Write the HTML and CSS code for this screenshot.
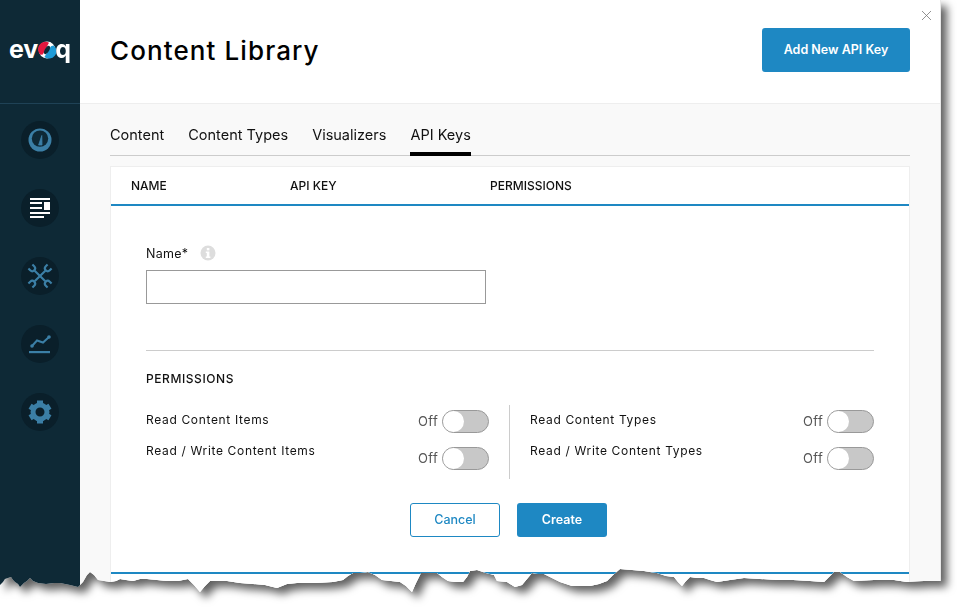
FILE: index.html
```html
<!DOCTYPE html>
<html lang="en">
<head>
    <meta charset="UTF-8">
    <meta name="viewport" content="width=device-width, initial-scale=1.0">
    <title>Content Library</title>
    <link rel="stylesheet" href="styles.css">
</head>
<body>
    <div class="shot">
        <div class="window">
            <aside class="sidebar">
                <div class="logo">
                    <span>ev</span><svg class="logo-o" viewBox="0 0 18 18" width="18" height="18">
                        <circle cx="9" cy="9" r="8.4" fill="#fff"/>
                        <path d="M2.5 13.8A7.4 7.4 0 0 1 11 1.8L4.8 13.6Z" fill="#e4173e"/>
                        <path d="M15.6 4.4A7.4 7.4 0 0 1 6.4 16L13 5.2Z" fill="#1e9bd7"/>
                        <ellipse cx="9" cy="9" rx="2.2" ry="4.6" transform="rotate(30 9 9)" fill="#0e2936"/>
                    </svg><span>q</span>
                </div>
                <nav class="nav">
                    <div class="nav-item">
                        <svg viewBox="0 0 38 38" width="38" height="38">
                            <circle cx="19" cy="19" r="11.5" fill="#3b7fa6"/>
                            <circle cx="19" cy="17.6" r="8.2" fill="#0e2936"/>
                            <path d="M17.6 24L20.8 14.5L21 24Z" fill="#3b7fa6" stroke="#3b7fa6" stroke-width="0.8"/>
                        </svg>
                    </div>
                    <div class="nav-item">
                        <svg viewBox="0 0 38 38" width="38" height="38" fill="#fff">
                            <rect x="9" y="9" width="20" height="2"/>
                            <rect x="9" y="13" width="12" height="2"/>
                            <rect x="9" y="18" width="12" height="2"/>
                            <rect x="23" y="13" width="6" height="8"/>
                            <rect x="9" y="23" width="20" height="2"/>
                            <rect x="9" y="27" width="14" height="2"/>
                        </svg>
                    </div>
                    <div class="nav-item">
                        <svg viewBox="0 0 38 38" width="38" height="38" fill="none" stroke="#3b7fa6" stroke-width="2.4">
                            <g transform="translate(19 19) rotate(45) scale(0.88)">
                                <path d="M0 -9V9M-3.2 -15.4V-12.5Q-3.2 -9.2 0 -9.2Q3.2 -9.2 3.2 -12.5V-15.4M-3.2 15.4V12.5Q-3.2 9.2 0 9.2Q3.2 9.2 3.2 12.5V15.4"/>
                            </g>
                            <g transform="translate(19 19) rotate(-45) scale(0.88)">
                                <path d="M0 -9V9M-3.2 -15.4V-12.5Q-3.2 -9.2 0 -9.2Q3.2 -9.2 3.2 -12.5V-15.4M-3.2 15.4V12.5Q-3.2 9.2 0 9.2Q3.2 9.2 3.2 12.5V15.4"/>
                            </g>
                        </svg>
                    </div>
                    <div class="nav-item">
                        <svg viewBox="0 0 38 38" width="38" height="38" fill="#3b7fa6">
                            <rect x="8" y="26" width="21" height="2.2"/>
                            <path d="M11 21L16 15.5L22 17.5L28 12" fill="none" stroke="#3b7fa6" stroke-width="2"/>
                            <circle cx="11" cy="21" r="1.8"/>
                            <circle cx="28" cy="12" r="1.8"/>
                        </svg>
                    </div>
                    <div class="nav-item">
                        <svg viewBox="0 0 38 38" width="38" height="38" fill="#3b7fa6">
                            <circle cx="19" cy="19" r="7" fill="none" stroke="#3b7fa6" stroke-width="5"/>
                            <rect x="16" y="7.5" width="6" height="5"/>
                            <rect x="16" y="25.5" width="6" height="5"/>
                            <rect x="16" y="7.5" width="6" height="5" transform="rotate(60 19 19)"/>
                            <rect x="16" y="25.5" width="6" height="5" transform="rotate(60 19 19)"/>
                            <rect x="16" y="7.5" width="6" height="5" transform="rotate(120 19 19)"/>
                            <rect x="16" y="25.5" width="6" height="5" transform="rotate(120 19 19)"/>
                        </svg>
                    </div>
                </nav>
            </aside>

            <main class="main">
                <header class="header">
                    <h1>Content Library</h1>
                    <button class="btn btn-primary btn-add">Add New API Key</button>
                    <svg class="close" viewBox="0 0 9 9" width="9" height="9">
                        <path d="M0 0L9 9M9 0L0 9" stroke="#777" stroke-width="0.8"/>
                    </svg>
                </header>

                <div class="content">
                    <div class="tabs">
                        <a>Content</a>
                        <a>Content Types</a>
                        <a>Visualizers</a>
                        <a class="active">API Keys</a>
                    </div>

                    <section class="card">
                        <div class="card-head">
                            <span>NAME</span>
                            <span>API KEY</span>
                            <span>PERMISSIONS</span>
                        </div>
                        <form class="form">
                            <div class="name-label">
                                <label>Name*</label>
                                <svg viewBox="0 0 16 16" width="16" height="16">
                                    <circle cx="8" cy="8" r="7.5" fill="#ddd"/>
                                    <rect x="6.8" y="3" width="2.6" height="2.4" fill="#fff"/>
                                    <path d="M5.8 6.6H9.4V11.6H10.4V13H5.8V11.6H6.8V8H5.8Z" fill="#fff"/>
                                </svg>
                            </div>
                            <input class="name-input" type="text">
                            <hr class="rule">
                            <h2 class="perm-title">PERMISSIONS</h2>
                            <div class="perms">
                                <div class="perm-col">
                                    <div class="perm-labels">
                                        <div>Read Content Items</div>
                                        <div>Read / Write Content Items</div>
                                    </div>
                                    <div class="perm-toggles">
                                        <div class="switch-row"><span class="off">Off</span><span class="switch"></span></div>
                                        <div class="switch-row"><span class="off">Off</span><span class="switch"></span></div>
                                    </div>
                                </div>
                                <div class="perm-col">
                                    <div class="perm-labels">
                                        <div>Read Content Types</div>
                                        <div>Read / Write Content Types</div>
                                    </div>
                                    <div class="perm-toggles">
                                        <div class="switch-row"><span class="off">Off</span><span class="switch"></span></div>
                                        <div class="switch-row"><span class="off">Off</span><span class="switch"></span></div>
                                    </div>
                                </div>
                            </div>
                            <div class="actions">
                                <button type="button" class="btn btn-outline">Cancel</button>
                                <button type="button" class="btn btn-primary">Create</button>
                            </div>
                        </form>
                        <div class="card-next"></div>
                    </section>
                </div>
            </main>
        </div>
    </div>
</body>
</html>
```

FILE: styles.css
```css
* {
    box-sizing: border-box;
}
html, body {
    margin: 0;
    height: 100%;
    background: #fff;
    overflow: hidden;
}
body {
    font-family: "Inter", "Liberation Sans", sans-serif;
    color: #111;
}
.shot {
    width: 957px;
    height: 615px;
    filter: drop-shadow(6px 6px 4px rgba(0,0,0,0.62));
}
/* torn paper edge along the bottom of the screenshot */
.window {
    display: flex;
    width: 941px;
    height: 600px;
    background: #fff;
    clip-path: polygon(0 0, 0 585px, 3px 582px, 5px 579px, 8px 578px, 11px 577px, 13px 580px, 15px 582px, 18px 584px, 20px 587px, 24px 583px, 27px 581px, 30px 578px, 33px 581px, 38px 583px, 46px 584px, 54px 583px, 60px 583px, 70px 585px, 78px 587px, 83px 582px, 87px 575px, 90px 572px, 94px 575px, 98px 580px, 104px 581px, 110px 582px, 116px 581px, 120px 579px, 126px 580px, 133px 581px, 140px 579px, 147px 579px, 157px 580px, 167px 581px, 178px 581px, 188px 579px, 194px 585px, 200px 592px, 205px 586px, 210px 581px, 219px 581px, 227px 581px, 240px 583px, 253px 584px, 265px 585px, 277px 588px, 287px 584px, 297px 583px, 315px 583px, 333px 582px, 343px 580px, 348px 576px, 353px 573px, 360px 573px, 368px 572px, 375px 575px, 382px 580px, 391px 581px, 400px 582px, 406px 586px, 412px 592px, 416px 583px, 421px 573px, 429px 573px, 437px 573px, 442px 577px, 448px 581px, 455px 582px, 463px 582px, 467px 577px, 470px 571px, 477px 570px, 486px 573px, 494px 575px, 497px 581px, 507px 582px, 515px 587px, 522px 585px, 527px 579px, 532px 573px, 538px 574px, 544px 574px, 552px 578px, 560px 582px, 572px 586px, 581px 586px, 590px 586px, 599px 584px, 607px 581px, 613px 575px, 620px 569px, 632px 570px, 644px 571px, 650px 572px, 657px 573px, 666px 576px, 674px 577px, 678px 582px, 682px 586px, 686px 581px, 690px 577px, 697px 578px, 704px 578px, 710px 580px, 717px 582px, 730px 580px, 744px 578px, 760px 579px, 777px 580px, 793px 580px, 810px 581px, 824px 582px, 829px 577px, 834px 572px, 840px 572px, 847px 577px, 854px 581px, 874px 580px, 894px 580px, 907px 582px, 924px 581px, 941px 581px, 941px 0);
}
.sidebar {
    flex: 0 0 80px;
    background: #0e2936;
}
.logo {
    display: flex;
    align-items: center;
    justify-content: center;
    height: 104px;
    padding-bottom: 5px;
    border-bottom: 1px solid #1f4256;
    color: #fff;
    font-size: 25px;
    font-weight: 700;
    line-height: 1;
}
.logo-o {
    margin: 2px -0.5px 0;
}
.nav {
    display: flex;
    flex-direction: column;
    align-items: center;
    gap: 30px;
    padding-top: 17px;
}
.nav-item {
    width: 38px;
    height: 38px;
    border-radius: 50%;
    background: #0a1f2a;
}
.nav-item svg {
    display: block;
}
.main {
    flex: 1;
    display: flex;
    flex-direction: column;
    border-right: 1px solid #e8e8e8;
}
.header {
    position: relative;
    display: flex;
    align-items: center;
    justify-content: space-between;
    flex: 0 0 104px;
    padding: 0 30px 4px;
    background: #fff;
    border-bottom: 1px solid #eee;
}
.header h1 {
    margin: 2px 0 0;
    font-size: 26px;
    font-weight: 500;
    letter-spacing: 1.1px;
    color: #000;
}
.close {
    position: absolute;
    top: 11px;
    right: 9px;
}
.btn {
    height: 34px;
    width: 90px;
    border-radius: 3px;
    font-family: inherit;
    font-size: 12.5px;
    font-weight: 600;
    padding: 0 0 1px;
}
.btn-primary {
    background: #1e88c3;
    border: 0;
    color: #fff;
}
.btn-outline {
    background: #fff;
    border: 1px solid #1e88c3;
    color: #1e88c3;
    font-weight: 500;
}
.btn-add {
    width: 148px;
    height: 44px;
}
.content {
    flex: 1;
    padding: 0 30px;
    background: #f9f9f9;
}
.tabs {
    display: flex;
    gap: 24px;
    height: 52px;
    border-bottom: 1px solid #ccc;
}
.tabs a {
    height: 52px;
    padding-top: 21px;
    font-size: 14.5px;
    font-weight: 400;
    line-height: 20px;
    color: #111;
}
.tabs a.active {
    border-bottom: 4px solid #000;
}
.card {
    margin-top: 10px;
    height: 440px;
    background: #fff;
    border: 1px solid #eee;
}
.card-head {
    display: grid;
    grid-template-columns: 159px 200px 1fr;
    align-items: center;
    height: 39px;
    padding-left: 20px;
    border-bottom: 2px solid #1e88c3;
    font-size: 12px;
    font-weight: 500;
    color: #111;
}
.form {
    height: 366px;
    padding: 38px 35px 0;
}
.name-label {
    display: flex;
    align-items: center;
    gap: 12px;
    height: 18px;
    font-size: 12.5px;
    letter-spacing: 0.3px;
}
.name-input {
    display: block;
    width: 340px;
    height: 34px;
    margin-top: 8px;
    border: 1px solid #999;
    background: #fff;
}
.rule {
    margin: 46px 0 0;
    border: 0;
    border-top: 1px solid #ccc;
}
.perm-title {
    margin: 20px 0 0;
    font-size: 12px;
    font-weight: 500;
    line-height: 16px;
    letter-spacing: 0.57px;
}
.perms {
    display: grid;
    grid-template-columns: 1fr 1fr;
    margin-top: 18px;
    height: 74px;
}
.perm-col {
    display: flex;
    justify-content: space-between;
}
.perm-col:first-child {
    padding-right: 20px;
    border-right: 1px solid #ccc;
}
.perm-col:last-child {
    padding-left: 20px;
}
.perm-labels {
    margin-top: -1px;
    font-size: 12px;
    line-height: 31px;
    letter-spacing: 0.66px;
}
.perm-toggles {
    display: flex;
    flex-direction: column;
    gap: 14px;
    padding-top: 5px;
}
.switch-row {
    display: flex;
    align-items: center;
    gap: 4px;
    height: 23px;
    font-size: 13px;
    letter-spacing: 0.3px;
    color: #555;
}
.off {
    margin-top: -2px;
}
.switch {
    position: relative;
    width: 47px;
    height: 23px;
    border-radius: 12px;
    background: #c8c8c8;
    border: 1px solid #999;
}
.switch::before {
    content: "";
    position: absolute;
    left: 0;
    top: 0;
    width: 21px;
    height: 21px;
    border-radius: 50%;
    background: #fff;
}
.actions {
    display: flex;
    justify-content: center;
    gap: 17px;
    margin-top: 24px;
    padding-right: 3px;
}
.card-next {
    border-top: 2px solid #1e88c3;
}
```
